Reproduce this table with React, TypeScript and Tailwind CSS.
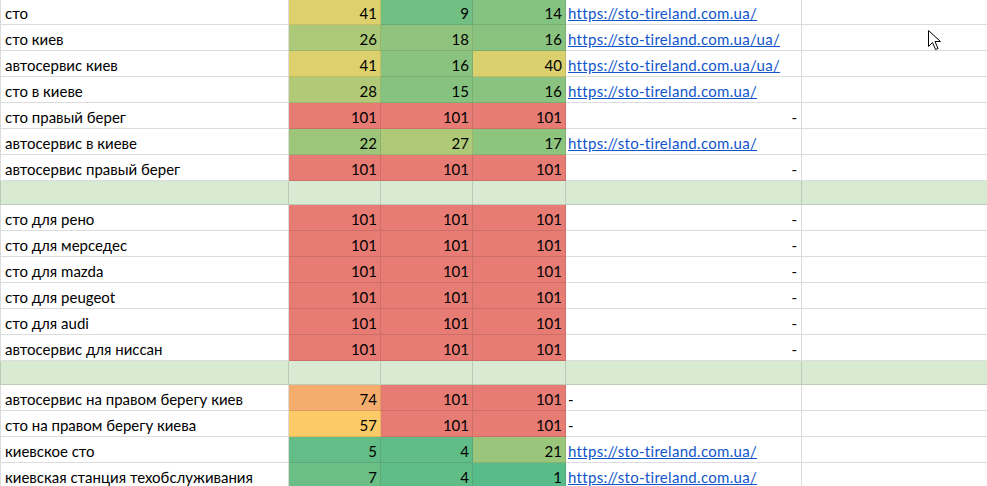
type Row = [string, number, number, number, string] | null

const LINK = 'https://sto-tireland.com.ua/'
const LINK_UA = 'https://sto-tireland.com.ua/ua/'

const rows: Row[] = [
  ['сто', 41, 9, 14, LINK],
  ['сто киев', 26, 18, 16, LINK_UA],
  ['автосервис киев', 41, 16, 40, LINK_UA],
  ['сто в киеве', 28, 15, 16, LINK],
  ['сто правый берег', 101, 101, 101, '-r'],
  ['автосервис в киеве', 22, 27, 17, LINK],
  ['автосервис правый берег', 101, 101, 101, '-r'],
  null,
  ['сто для рено', 101, 101, 101, '-r'],
  ['сто для мерседес', 101, 101, 101, '-r'],
  ['сто для mazda', 101, 101, 101, '-r'],
  ['сто для peugeot', 101, 101, 101, '-r'],
  ['сто для audi', 101, 101, 101, '-r'],
  ['автосервис для ниссан', 101, 101, 101, '-r'],
  null,
  ['автосервис на правом берегу киев', 74, 101, 101, '-l'],
  ['сто на правом берегу киева', 57, 101, 101, '-l'],
  ['киевское сто', 5, 4, 21, LINK],
  ['киевская станция техобслуживания', 7, 4, 1, LINK],
]

// green -> yellow -> red colour scale (min 1, mid 51, max 101)
function scale(v: number) {
  const g = [87, 187, 138]
  const y = [255, 214, 102]
  const r = [230, 124, 115]
  const [a, b, t] = v <= 51 ? [g, y, (v - 1) / 50] : [y, r, (v - 51) / 50]
  const c = a.map((x, i) => Math.round(x + (b[i] - x) * t))
  return `rgb(${c[0]}, ${c[1]}, ${c[2]})`
}

function NumCell({ v, w }: { v: number; w: string }) {
  return (
    <div
      className={`${w} h-full shrink-0 flex items-end justify-end pr-[3px] border-r border-b border-black/10`}
      style={{ backgroundColor: scale(v) }}
    >
      {v}
    </div>
  )
}

function Cursor() {
  return (
    <svg className="absolute left-[928px] top-[30px]" width="14" height="21" viewBox="0 0 14 21">
      <path d="M0.5 0.5 L0.5 16.5 L4.5 12.5 L7.5 19.5 L10 18.5 L7 11.5 L12.5 11.5 Z" fill="#fff" stroke="#000" strokeWidth="1" />
    </svg>
  )
}

export default function App() {
  return (
    <div className="relative w-[987px] h-[486px] overflow-hidden bg-white text-[15px] leading-[22px] text-black font-['Lato',sans-serif]">
      <div className="-mt-px w-[1200px]">
        {rows.map((row, i) =>
          row === null ? (
            <div key={i} className="-mt-px h-[25px] flex bg-[#d9ead3] border-y border-[#bccbb7]">
              <div className="w-[289px] shrink-0 border-l border-r border-[#bccbb7]" />
              <div className="w-[92px] shrink-0 border-r border-[#bccbb7]" />
              <div className="w-[92px] shrink-0 border-r border-[#bccbb7]" />
              <div className="w-[93px] shrink-0 border-r border-[#bccbb7]" />
              <div className="w-[236px] shrink-0 border-r border-[#bccbb7]" />
              <div className="flex-1" />
            </div>
          ) : (
            <div key={i} className="h-[26px] flex">
              <div className="w-[289px] shrink-0 flex items-end pl-1 border-l border-r border-b border-[#dcdcdc]">
                {row[0]}
              </div>
              <NumCell v={row[1]} w="w-[92px]" />
              <NumCell v={row[2]} w="w-[92px]" />
              <NumCell v={row[3]} w="w-[93px]" />
              <div
                className={`w-[236px] shrink-0 flex items-end border-r border-b border-[#dcdcdc] ${
                  row[4] === '-r' ? 'justify-end pr-[4px]' : 'pl-[2px]'
                }`}
              >
                {row[4].startsWith('http') ? (
                  <a href="#" className="text-[#1155cc] underline tracking-[0.3px]">{row[4]}</a>
                ) : (
                  '-'
                )}
              </div>
              <div className="flex-1 border-b border-[#dcdcdc]" />
            </div>
          )
        )}
      </div>
      <Cursor />
    </div>
  )
}
